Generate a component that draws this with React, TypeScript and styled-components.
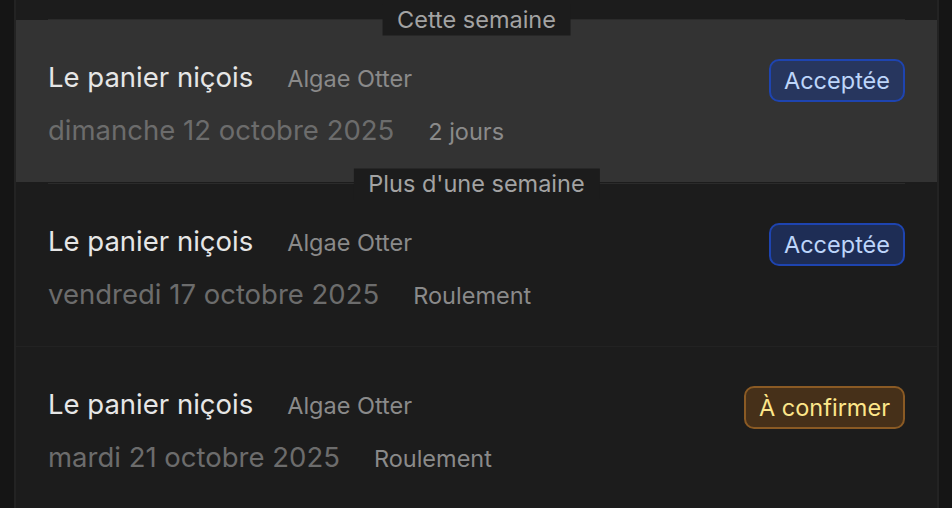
import React from "react";
import styled, { createGlobalStyle } from "styled-components";

type Status = "accepted" | "pending";

type Shift = {
  title: string;
  who: string;
  date: string;
  note: string;
  status: Status;
  active?: boolean;
};

const sections: { label: string; items: Shift[] }[] = [
  {
    label: "Cette semaine",
    items: [
      {
        title: "Le panier niçois",
        who: "Algae Otter",
        date: "dimanche 12 octobre 2025",
        note: "2 jours",
        status: "accepted",
        active: true,
      },
    ],
  },
  {
    label: "Plus d'une semaine",
    items: [
      {
        title: "Le panier niçois",
        who: "Algae Otter",
        date: "vendredi 17 octobre 2025",
        note: "Roulement",
        status: "accepted",
      },
      {
        title: "Le panier niçois",
        who: "Algae Otter",
        date: "mardi 21 octobre 2025",
        note: "Roulement",
        status: "pending",
      },
    ],
  },
];

const statusLabel: Record<Status, string> = {
  accepted: "Acceptée",
  pending: "À confirmer",
};

export default function App() {
  return (
    <>
      <GlobalStyle />
      <Panel>
        {sections.map((section) => (
          <Section key={section.label}>
            <Divider>
              <DividerLabel>{section.label}</DividerLabel>
            </Divider>
            {section.items.map((item, i) => (
              <Row key={i} $active={item.active}>
                <Info>
                  <Line>
                    <Title>{item.title}</Title>
                    <Meta>{item.who}</Meta>
                  </Line>
                  <Line>
                    <DateText>{item.date}</DateText>
                    <Meta>{item.note}</Meta>
                  </Line>
                </Info>
                <Badge $status={item.status}>{statusLabel[item.status]}</Badge>
              </Row>
            ))}
          </Section>
        ))}
      </Panel>
    </>
  );
}

const GlobalStyle = createGlobalStyle`
  html, body {
    margin: 0;
    padding: 0;
    background: #151515;
    height: 100%;
    overflow: hidden;
  }
  body {
    font-family: Inter, "Noto Sans", "Liberation Sans", sans-serif;
    -webkit-font-smoothing: antialiased;
  }
`;

const Panel = styled.main`
  margin-left: 14px;
  width: 925px;
  min-height: 508px;
  box-sizing: border-box;
  background: #1c1c1c;
  border-left: 2px solid #232323;
  border-right: 2px solid #232323;
  padding-top: 19px;
`;

const Section = styled.section`
  display: flex;
  flex-direction: column;

  & + & {
    margin-top: 1px;
  }
`;

const Divider = styled.div`
  position: relative;
  height: 1px;
  margin: 0 32px;
  background: #2b2b2b;
`;

const DividerLabel = styled.span`
  position: absolute;
  left: 50%;
  top: 50%;
  transform: translate(-50%, -50%);
  padding: 0 15px;
  height: 31px;
  line-height: 30px;
  background: #1c1c1c;
  color: #a3a3a3;
  font-size: 23.5px;
  white-space: nowrap;
  z-index: 1;
`;

const Row = styled.article<{ $active?: boolean }>`
  display: flex;
  align-items: flex-start;
  justify-content: space-between;
  padding: 39px 32px 34px;
  background: ${(p) => (p.$active ? "#333333" : "transparent")};
  border-bottom: 1px solid ${(p) => (p.$active ? "transparent" : "#222222")};

  &:last-child {
    border-bottom: none;
  }
`;

const Info = styled.div`
  display: flex;
  flex-direction: column;
  gap: 17px;
`;

const Line = styled.div`
  display: flex;
  align-items: baseline;
  gap: 34px;
  height: 36px;
  line-height: 36px;
`;

const Title = styled.span`
  font-size: 27.5px;
  color: #e6e6e6;
`;

const DateText = styled.span`
  font-size: 27.5px;
  color: #6c6c6c;
`;

const Meta = styled.span`
  font-size: 23.5px;
  color: #8a8a8a;
`;

const Badge = styled.span<{ $status: Status }>`
  box-sizing: border-box;
  height: 43px;
  line-height: 39px;
  padding: 0 13px;
  border-radius: 10px;
  font-size: 23.5px;
  white-space: nowrap;
  border: 2px solid
    ${(p) => (p.$status === "accepted" ? "#1e44b0" : "#8a5a24")};
  background: ${(p) =>
    p.$status === "accepted"
      ? "rgba(33, 56, 121, 0.62)"
      : "rgba(99, 62, 24, 0.6)"};
  color: ${(p) => (p.$status === "accepted" ? "#bdd5fa" : "#fde68a")};
`;
